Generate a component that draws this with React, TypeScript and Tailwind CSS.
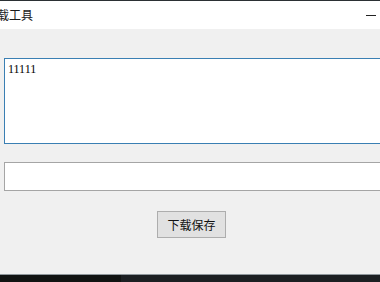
import React from "react";

export default function App() {
  const cjk = { fontFamily: '"Noto Sans CJK SC", "Noto Sans", sans-serif' };
  return (
    <div className="w-[380px] h-[282px] flex flex-col overflow-hidden bg-[#f0f0f0]">
      <div className="h-[1px] bg-[#2b3034] shrink-0" />
      <div className="h-[28px] shrink-0 bg-white flex items-center justify-between">
        <span className="text-[12px] leading-none text-[#1a1a1a] ml-[-3px]" style={cjk}>
          载工具
        </span>
        <div className="w-[10px] h-[1px] bg-[#222] mr-[4px]" />
      </div>
      <div className="flex-1 flex flex-col bg-[#f0f0f0] pt-[29px] pl-[4px]">
        <div
          className="w-[400px] h-[86px] shrink-0 bg-white border border-[#3a7fb3] pl-[3px] pt-[3px] text-[12px] leading-[14px] text-black"
          style={{ fontFamily: '"Liberation Serif", serif' }}
        >
          11111
        </div>
        <div className="w-[400px] h-[29px] shrink-0 mt-[18px] bg-white border border-[#a5a5a5]" />
        <div
          className="mt-[20px] ml-[153px] w-[69px] h-[27px] shrink-0 bg-[#e1e1e1] border border-[#adadad] flex items-center justify-center text-[12px] leading-none text-[#111]"
          style={cjk}
        >
          下载保存
        </div>
      </div>
      <div className="h-[1px] bg-[#8f979c] shrink-0" />
      <div className="h-[7px] shrink-0 flex">
        <div className="w-[121px] bg-[#111312]" />
        <div className="flex-1 bg-[#1c1f22]" />
      </div>
    </div>
  );
}
